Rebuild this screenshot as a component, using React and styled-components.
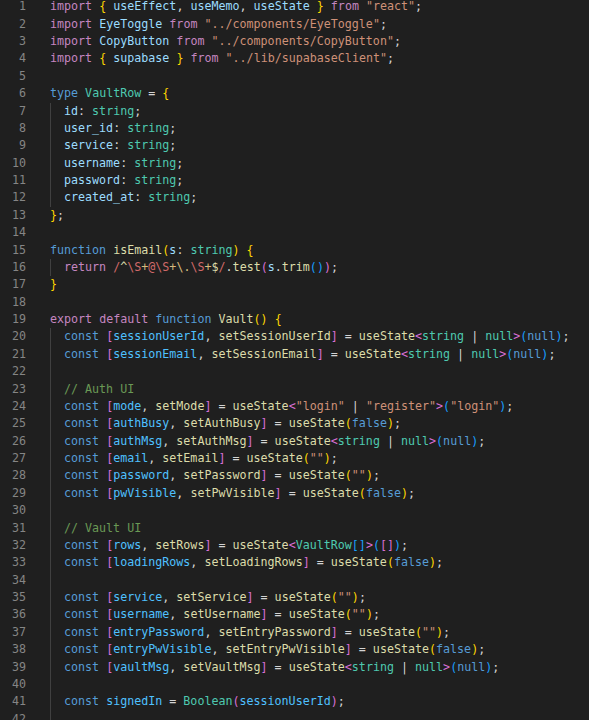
import React from "react";
import styled, { createGlobalStyle } from "styled-components";

const Global = createGlobalStyle`
  html, body { margin: 0; padding: 0; background: #1f1f1f; overflow: hidden; }
  #root { min-height: 720px; background: #1f1f1f; }
`;

const COLORS = {
  kw: "#c586c0",
  st: "#569cd6",
  v: "#9cdcfe",
  c: "#4fc1ff",
  ty: "#4ec9b0",
  s: "#ce9178",
  fn: "#dcdcaa",
  p: "#d4d4d4",
  b1: "#ffd700",
  b2: "#da70d6",
  b3: "#179fff",
  cm: "#6a9955",
  re: "#d16969",
  rq: "#d7ba7d",
  ra: "#dcdcaa",
};

const LH = 17.375;

const Editor = styled.div`
  display: flex;
  flex-direction: column;
  margin-top: -1.7px;
  font-family: "DejaVu Sans Mono", "Liberation Mono", monospace;
  font-size: 11.66px;
  background: #1f1f1f;
`;

const Line = styled.div`
  display: flex;
  height: ${LH}px;
  line-height: ${LH}px;
`;

const LineNo = styled.div`
  width: 26px;
  flex: none;
  text-align: right;
  color: #858585;
  margin-right: 24px;
`;

const Code = styled.div`
  white-space: pre;
  display: flex;
  align-items: stretch;
`;

const Indent = styled.span`
  display: inline-block;
  width: 14px;
  height: ${LH}px;
  box-shadow: inset 1px 0 0 #404040;
`;

const Tok = styled.span`
  color: ${(p) => COLORS[p.$k] || "#d4d4d4"};
`;

const T = (k, x) => [k, x];

const strDecl = (name, setter) => [
  T("st", "const"), T("p", " "), T("b2", "["), T("c", name), T("p", ", "),
  T("fn", setter), T("b2", "]"), T("p", " = "), T("fn", "useState"),
  T("b2", "<"), T("ty", "string"), T("p", " | "), T("ty", "null"), T("b2", ">"),
  T("b3", "("), T("st", "null"), T("b3", ")"), T("p", ";"),
];
const boolDecl = (name, setter) => [
  T("st", "const"), T("p", " "), T("b2", "["), T("c", name), T("p", ", "),
  T("fn", setter), T("b2", "]"), T("p", " = "), T("fn", "useState"),
  T("b1", "("), T("st", "false"), T("b1", ")"), T("p", ";"),
];
const emptyDecl = (name, setter) => [
  T("st", "const"), T("p", " "), T("b2", "["), T("c", name), T("p", ", "),
  T("fn", setter), T("b2", "]"), T("p", " = "), T("fn", "useState"),
  T("b1", "("), T("s", '""'), T("b1", ")"), T("p", ";"),
];
const prop = (name) => [T("v", name), T("p", ": "), T("ty", "string"), T("p", ";")];

// [indentLevel, tokens]
const LINES = [
  [0, [T("kw", "import"), T("p", " "), T("b1", "{"), T("p", " "), T("v", "useEffect"), T("p", ", "), T("v", "useMemo"), T("p", ", "), T("v", "useState"), T("p", " "), T("b1", "}"), T("p", " "), T("kw", "from"), T("p", " "), T("s", '"react"'), T("p", ";")]],
  [0, [T("kw", "import"), T("p", " "), T("v", "EyeToggle"), T("p", " "), T("kw", "from"), T("p", " "), T("s", '"../components/EyeToggle"'), T("p", ";")]],
  [0, [T("kw", "import"), T("p", " "), T("v", "CopyButton"), T("p", " "), T("kw", "from"), T("p", " "), T("s", '"../components/CopyButton"'), T("p", ";")]],
  [0, [T("kw", "import"), T("p", " "), T("b1", "{"), T("p", " "), T("v", "supabase"), T("p", " "), T("b1", "}"), T("p", " "), T("kw", "from"), T("p", " "), T("s", '"../lib/supabaseClient"'), T("p", ";")]],
  [0, []],
  [0, [T("st", "type"), T("p", " "), T("ty", "VaultRow"), T("p", " = "), T("b1", "{")]],
  [1, prop("id")],
  [1, prop("user_id")],
  [1, prop("service")],
  [1, prop("username")],
  [1, prop("password")],
  [1, prop("created_at")],
  [0, [T("b1", "}"), T("p", ";")]],
  [0, []],
  [0, [T("st", "function"), T("p", " "), T("fn", "isEmail"), T("b1", "("), T("v", "s"), T("p", ": "), T("ty", "string"), T("b1", ")"), T("p", " "), T("b1", "{")]],
  [1, [T("kw", "return"), T("p", " "), T("re", "/"), T("ra", "^"), T("re", "\\S"), T("rq", "+"), T("re", "@"), T("re", "\\S"), T("rq", "+"), T("rq", "\\."), T("re", "\\S"), T("rq", "+"), T("ra", "$"), T("re", "/"), T("p", "."), T("fn", "test"), T("b2", "("), T("v", "s"), T("p", "."), T("fn", "trim"), T("b3", "()"), T("b2", ")"), T("p", ";")]],
  [0, [T("b1", "}")]],
  [0, []],
  [0, [T("kw", "export"), T("p", " "), T("kw", "default"), T("p", " "), T("st", "function"), T("p", " "), T("fn", "Vault"), T("b1", "()"), T("p", " "), T("b1", "{")]],
  [1, strDecl("sessionUserId", "setSessionUserId")],
  [1, strDecl("sessionEmail", "setSessionEmail")],
  [1, []],
  [1, [T("cm", "// Auth UI")]],
  [1, [T("st", "const"), T("p", " "), T("b2", "["), T("c", "mode"), T("p", ", "), T("fn", "setMode"), T("b2", "]"), T("p", " = "), T("fn", "useState"), T("b2", "<"), T("s", '"login"'), T("p", " | "), T("s", '"register"'), T("b2", ">"), T("b3", "("), T("s", '"login"'), T("b3", ")"), T("p", ";")]],
  [1, boolDecl("authBusy", "setAuthBusy")],
  [1, strDecl("authMsg", "setAuthMsg")],
  [1, emptyDecl("email", "setEmail")],
  [1, emptyDecl("password", "setPassword")],
  [1, boolDecl("pwVisible", "setPwVisible")],
  [1, []],
  [1, [T("cm", "// Vault UI")]],
  [1, [T("st", "const"), T("p", " "), T("b2", "["), T("c", "rows"), T("p", ", "), T("fn", "setRows"), T("b2", "]"), T("p", " = "), T("fn", "useState"), T("b2", "<"), T("ty", "VaultRow"), T("b3", "[]"), T("b2", ">"), T("b3", "("), T("b2", "[]"), T("b3", ")"), T("p", ";")]],
  [1, boolDecl("loadingRows", "setLoadingRows")],
  [1, []],
  [1, emptyDecl("service", "setService")],
  [1, emptyDecl("username", "setUsername")],
  [1, emptyDecl("entryPassword", "setEntryPassword")],
  [1, boolDecl("entryPwVisible", "setEntryPwVisible")],
  [1, strDecl("vaultMsg", "setVaultMsg")],
  [1, []],
  [1, [T("st", "const"), T("p", " "), T("c", "signedIn"), T("p", " = "), T("ty", "Boolean"), T("b2", "("), T("c", "sessionUserId"), T("b2", ")"), T("p", ";")]],
  [1, []],
];

export default function App() {
  return (
    <>
      <Global />
      <Editor>
        {LINES.map(([indent, toks], i) => (
          <Line key={i}>
            <LineNo>{i + 1}</LineNo>
            <Code>
              {Array.from({ length: indent }).map((_, j) => (
                <Indent key={"i" + j} />
              ))}
              <span>
                {toks.map(([k, x], j) => (
                  <Tok key={j} $k={k}>
                    {x}
                  </Tok>
                ))}
              </span>
            </Code>
          </Line>
        ))}
      </Editor>
    </>
  );
}
